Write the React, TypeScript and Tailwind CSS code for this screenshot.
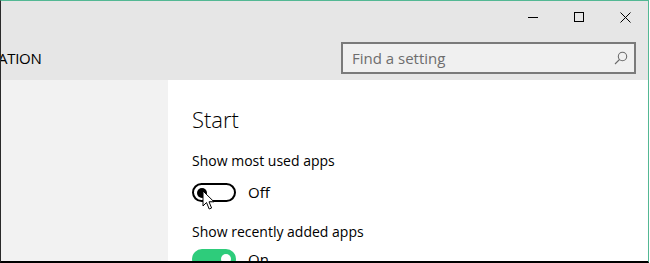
import React from "react";

const font = { fontFamily: '"Open Sans", "Noto Sans", sans-serif' };

const SearchIcon = () => (
  <svg width="14" height="14" viewBox="0 0 14 14" fill="none" stroke="#6b6b6b" strokeWidth="1.1">
    <circle cx="8.5" cy="5.5" r="4.2" />
    <path d="M5.5 8.5 L1 13" />
  </svg>
);

const Cursor = () => (
  <svg width="14" height="22" viewBox="0 0 14 22" className="absolute left-[8px] top-[5px]">
    <path
      d="M1 1 L1 16 L4.5 12.5 L7.2 19 L9.6 18 L7 11.8 L12 11.8 Z"
      fill="#fff"
      stroke="#000"
      strokeWidth="1"
      strokeLinejoin="round"
    />
  </svg>
);

export default function App() {
  return (
    <div className="w-[650px] h-[263px] bg-white">
      <div
        className="w-[649px] h-[263px] flex flex-col border-t border-t-[#53b894] border-l border-l-[#2a2a2a] border-r border-r-[#53b894] border-b-2 border-b-black overflow-hidden text-black"
        style={font}
      >
        {/* header */}
        <div className="h-[79px] shrink-0 bg-[#e6e6e6] flex flex-col">
          <div className="h-[32px] flex items-center justify-end">
            <div className="w-[46px] h-[32px] flex items-center justify-center">
              <div className="w-[10px] h-px bg-black" />
            </div>
            <div className="w-[46px] h-[32px] flex items-center justify-center">
              <div className="w-[10px] h-[10px] border border-black" />
            </div>
            <div className="w-[46px] h-[32px] flex items-center justify-center">
              <svg width="11" height="11" viewBox="0 0 11 11" stroke="#000" strokeWidth="1">
                <path d="M0.5 0.5 L10.5 10.5 M10.5 0.5 L0.5 10.5" />
              </svg>
            </div>
          </div>
          <div className="flex items-center justify-between pt-[9px]">
            <div className="overflow-hidden self-start pt-[9px]">
              <div className="text-[15px] font-medium -ml-[3px] leading-none tracking-[-0.3px]">ATION</div>
            </div>
            <div className="w-[295px] h-[32px] mr-[12px] border-2 border-[#7a7a7a] bg-[#f0f0f0] flex items-center justify-between pl-[9px] pr-[6px]">
              <span className="text-[15px] text-[#6d6d6d] leading-none">Find a setting</span>
              <SearchIcon />
            </div>
          </div>
        </div>
        {/* body */}
        <div className="flex flex-1">
          <div className="w-[167px] bg-[#f2f2f2]" />
          <div className="flex-1 pl-[24px] pt-[28px]">
            <div className="text-[22px] font-light leading-none">Start</div>
            <div className="text-[14px] leading-none mt-[24px]">Show most used apps</div>
            <div className="flex items-center mt-[15px]">
              <div className="relative w-[44px] h-[19px] rounded-full border-2 border-black flex items-center pl-[3px]">
                <div className="w-[10px] h-[10px] rounded-full bg-black" />
                <Cursor />
              </div>
              <span className="text-[15px] ml-[12px] leading-none">Off</span>
            </div>
            <div className="text-[14px] leading-none mt-[23px]">Show recently added apps</div>
            <div className="flex items-center mt-[10px]">
              <div className="w-[44px] h-[20px] rounded-full bg-[#2ecc7b] flex items-center justify-end pr-[5px]">
                <div className="w-[10px] h-[10px] rounded-full bg-white" />
              </div>
              <span className="text-[15px] ml-[12px] leading-none">On</span>
            </div>
          </div>
        </div>
      </div>
    </div>
  );
}
